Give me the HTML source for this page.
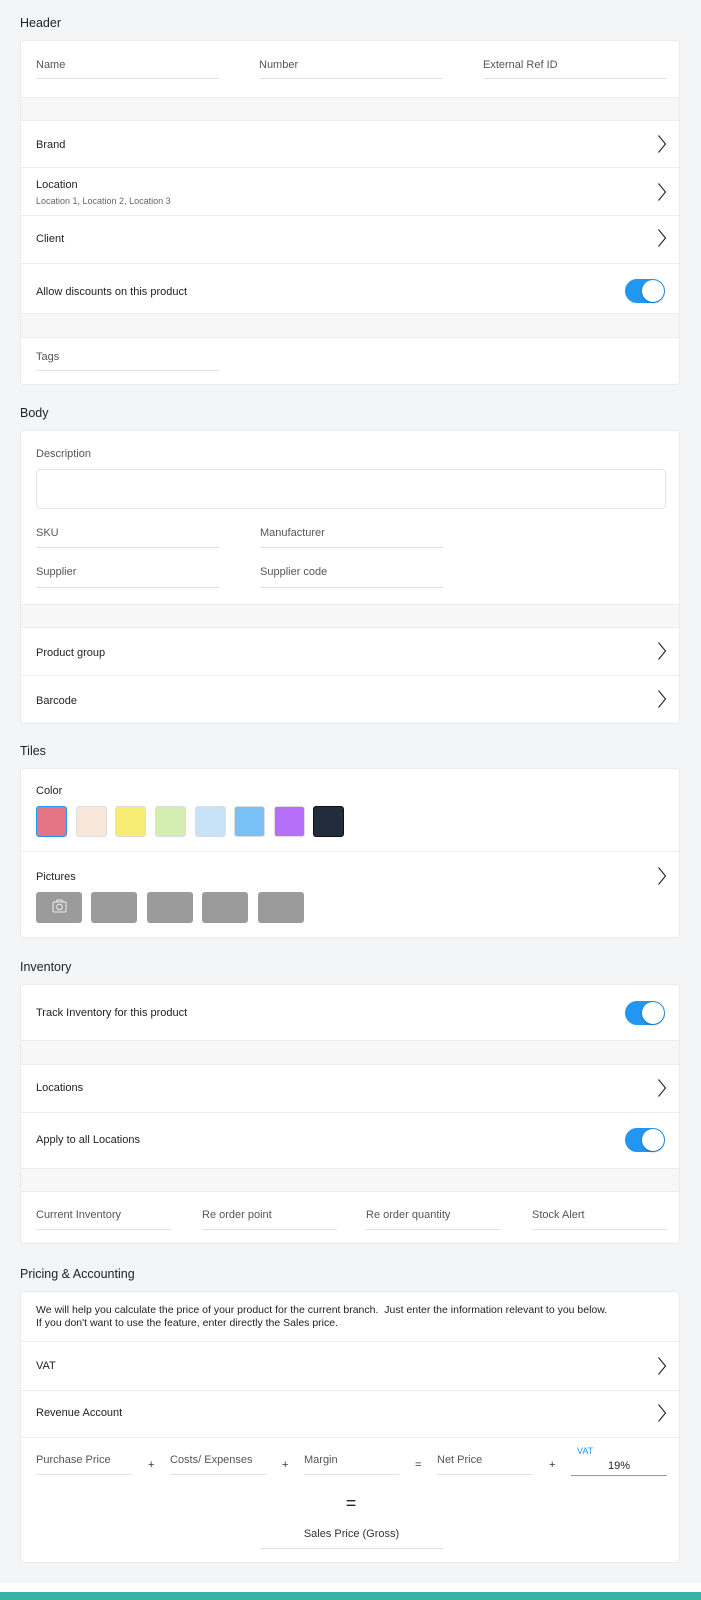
<!DOCTYPE html>
<html><head><meta charset="utf-8"><style>
*{margin:0;padding:0;box-sizing:border-box}
body{width:701px;height:1600px;background:#f4f5f7;font-family:"Liberation Sans",sans-serif;color:#222;position:relative;overflow:hidden}
.a{position:absolute}
.h{position:absolute;left:20px;font-size:12.5px;color:#222}
.card{position:absolute;left:20px;width:660px;background:#fff;border:1px solid #eaebed;border-radius:4px}
.band{position:absolute;left:0;width:100%;background:#f7f7f8;border-top:1px solid #ececee;border-bottom:1px solid #ececee}
.div{position:absolute;left:0;width:100%;height:1px;background:#ececee}
.t{position:absolute;font-size:11px;color:#222;white-space:nowrap}
.l{position:absolute;font-size:11px;color:#555;white-space:nowrap}
.ln{position:absolute;height:1px;background:#e2e2e2}
.chev{position:absolute;left:636px;width:10px;height:20px}
.tg{position:absolute;left:604px;width:40px;height:24px;border-radius:12px;background:#2196f3}
.tg::after{content:"";position:absolute;right:1px;top:1px;width:22px;height:22px;border-radius:50%;background:#fff;box-shadow:0 1px 2px rgba(0,0,0,.3)}
.sw{position:absolute;top:37px;width:31px;height:31px;border-radius:3px;border:1px solid #ddd}
.pb{position:absolute;top:123px;width:46px;height:31px;border-radius:3px;background:#9b9b9b}
.op{position:absolute;font-size:11px;color:#333}
</style></head><body>
<svg width="0" height="0" style="position:absolute"><defs><symbol id="cv" viewBox="0 0 10 20"><path d="M1.5 1.5 L8.5 10 L1.5 18.5" fill="none" stroke="#222" stroke-width="1.1"/></symbol></defs></svg>

<div class="h" style="top:16px">Header</div>
<div class="card" style="top:40px;height:345px">
 <div class="l" style="left:15px;top:18px">Name</div><div class="ln" style="left:15px;top:37px;width:183px"></div>
 <div class="l" style="left:238px;top:18px">Number</div><div class="ln" style="left:238px;top:37px;width:183px"></div>
 <div class="l" style="left:462px;top:18px">External Ref ID</div><div class="ln" style="left:462px;top:37px;width:183px"></div>
 <div class="band" style="top:56px;height:24px"></div>
 <div class="t" style="left:15px;top:98px">Brand</div><svg class="chev" style="top:93px"><use href="#cv"/></svg>
 <div class="div" style="top:126px"></div>
 <div class="t" style="left:15px;top:138px">Location</div>
 <div class="a" style="left:15px;top:155px;font-size:9px;color:#666">Location 1, Location 2, Location 3</div>
 <svg class="chev" style="top:141px"><use href="#cv"/></svg>
 <div class="div" style="top:174px"></div>
 <div class="t" style="left:15px;top:192px">Client</div><svg class="chev" style="top:187px"><use href="#cv"/></svg>
 <div class="div" style="top:222px"></div>
 <div class="t" style="left:15px;top:245px">Allow discounts on this product</div>
 <div class="tg" style="top:238px"></div>
 <div class="band" style="top:272px;height:25px"></div>
 <div class="l" style="left:15px;top:310px">Tags</div><div class="ln" style="left:15px;top:329px;width:183px"></div>
</div>

<div class="h" style="top:406px">Body</div>
<div class="card" style="top:430px;height:294px">
 <div class="l" style="left:15px;top:17px">Description</div>
 <div class="a" style="left:15px;top:38px;width:630px;height:40px;border:1px solid #e5e5e5;border-radius:4px"></div>
 <div class="l" style="left:15px;top:96px">SKU</div><div class="ln" style="left:15px;top:116px;width:183px"></div>
 <div class="l" style="left:239px;top:96px">Manufacturer</div><div class="ln" style="left:239px;top:116px;width:183px"></div>
 <div class="l" style="left:15px;top:135px">Supplier</div><div class="ln" style="left:15px;top:156px;width:183px"></div>
 <div class="l" style="left:239px;top:135px">Supplier code</div><div class="ln" style="left:239px;top:156px;width:183px"></div>
 <div class="band" style="top:173px;height:24px"></div>
 <div class="t" style="left:15px;top:216px">Product group</div><svg class="chev" style="top:210px"><use href="#cv"/></svg>
 <div class="div" style="top:244px"></div>
 <div class="t" style="left:15px;top:264px">Barcode</div><svg class="chev" style="top:258px"><use href="#cv"/></svg>
</div>

<div class="h" style="top:744px">Tiles</div>
<div class="card" style="top:768px;height:170px">
 <div class="t" style="left:15px;top:16px">Color</div>
 <div class="sw" style="left:15px;background:#e57583;border:1px solid #2196f3"></div>
 <div class="sw" style="left:55px;background:#f6e7da"></div>
 <div class="sw" style="left:94px;background:#f6ec73"></div>
 <div class="sw" style="left:134px;background:#d3eeb0"></div>
 <div class="sw" style="left:174px;background:#c8e2f8"></div>
 <div class="sw" style="left:213px;background:#79c0f6"></div>
 <div class="sw" style="left:253px;background:#b56ff8"></div>
 <div class="sw" style="left:292px;background:#222d3c;border-color:#111"></div>
 <div class="div" style="top:82px"></div>
 <div class="t" style="left:15px;top:102px">Pictures</div><svg class="chev" style="top:97px"><use href="#cv"/></svg>
 <div class="pb" style="left:15px"><svg width="46" height="31" viewBox="0 0 46 31"><rect x="17" y="10" width="13" height="10" rx="1" fill="none" stroke="#eee" stroke-width="1"/><path d="M20 10 L21 8 H26 L27 10" fill="none" stroke="#eee"/><circle cx="23.5" cy="15" r="2.8" fill="none" stroke="#eee"/></svg></div>
 <div class="pb" style="left:70px"></div>
 <div class="pb" style="left:126px"></div>
 <div class="pb" style="left:181px"></div>
 <div class="pb" style="left:237px"></div>
</div>

<div class="h" style="top:960px">Inventory</div>
<div class="card" style="top:984px;height:260px">
 <div class="t" style="left:15px;top:22px">Track Inventory for this product</div>
 <div class="tg" style="top:16px"></div>
 <div class="band" style="top:55px;height:25px"></div>
 <div class="t" style="left:15px;top:97px">Locations</div><svg class="chev" style="top:93px"><use href="#cv"/></svg>
 <div class="div" style="top:127px"></div>
 <div class="t" style="left:15px;top:149px">Apply to all Locations</div>
 <div class="tg" style="top:143px"></div>
 <div class="band" style="top:183px;height:24px"></div>
 <div class="l" style="left:15px;top:224px">Current Inventory</div><div class="ln" style="left:15px;top:244px;width:135px"></div>
 <div class="l" style="left:181px;top:224px">Re order point</div><div class="ln" style="left:181px;top:244px;width:135px"></div>
 <div class="l" style="left:345px;top:224px">Re order quantity</div><div class="ln" style="left:345px;top:244px;width:135px"></div>
 <div class="l" style="left:511px;top:224px">Stock Alert</div><div class="ln" style="left:511px;top:244px;width:135px"></div>
</div>

<div class="h" style="top:1267px">Pricing &amp; Accounting</div>
<div class="card" style="top:1291px;height:272px">
 <div class="a" style="left:15px;top:12px;font-size:10.5px;line-height:13px;color:#222">We will help you calculate the price of your product for the current branch.&nbsp; Just enter the information relevant to you below.<br>If you don't want to use the feature, enter directly the Sales price.</div>
 <div class="div" style="top:49px"></div>
 <div class="t" style="left:15px;top:68px">VAT</div><svg class="chev" style="top:64px"><use href="#cv"/></svg>
 <div class="div" style="top:98px"></div>
 <div class="t" style="left:15px;top:115px">Revenue Account</div><svg class="chev" style="top:111px"><use href="#cv"/></svg>
 <div class="div" style="top:145px"></div>
 <div class="l" style="left:15px;top:162px">Purchase Price</div><div class="ln" style="left:15px;top:182px;width:96px"></div>
 <div class="op" style="left:127px;top:167px">+</div>
 <div class="l" style="left:149px;top:162px">Costs/ Expenses</div><div class="ln" style="left:149px;top:182px;width:96px"></div>
 <div class="op" style="left:261px;top:167px">+</div>
 <div class="l" style="left:283px;top:162px">Margin</div><div class="ln" style="left:283px;top:182px;width:95px"></div>
 <div class="op" style="left:394px;top:167px">=</div>
 <div class="l" style="left:416px;top:162px">Net Price</div><div class="ln" style="left:416px;top:182px;width:96px"></div>
 <div class="op" style="left:528px;top:167px">+</div>
 <div class="a" style="left:556px;top:154px;font-size:9px;color:#2196f3">VAT</div>
 <div class="a" style="left:587px;top:168px;font-size:11px;color:#222">19%</div>
 <div class="a" style="left:550px;top:183px;width:96px;height:1px;background:#999"></div>
 <div class="a" style="left:320px;top:201px;width:20px;text-align:center;font-size:18px;color:#222">=</div>
 <div class="l" style="left:239px;width:183px;text-align:center;top:236px;color:#333">Sales Price (Gross)</div>
 <div class="ln" style="left:239px;top:256px;width:183px"></div>
</div>
<div class="a" style="left:0;top:1583px;width:701px;height:9px;background:#fff"></div>
<div class="a" style="left:0;top:1592px;width:701px;height:8px;background:#36b3a4"></div>
</body></html>
